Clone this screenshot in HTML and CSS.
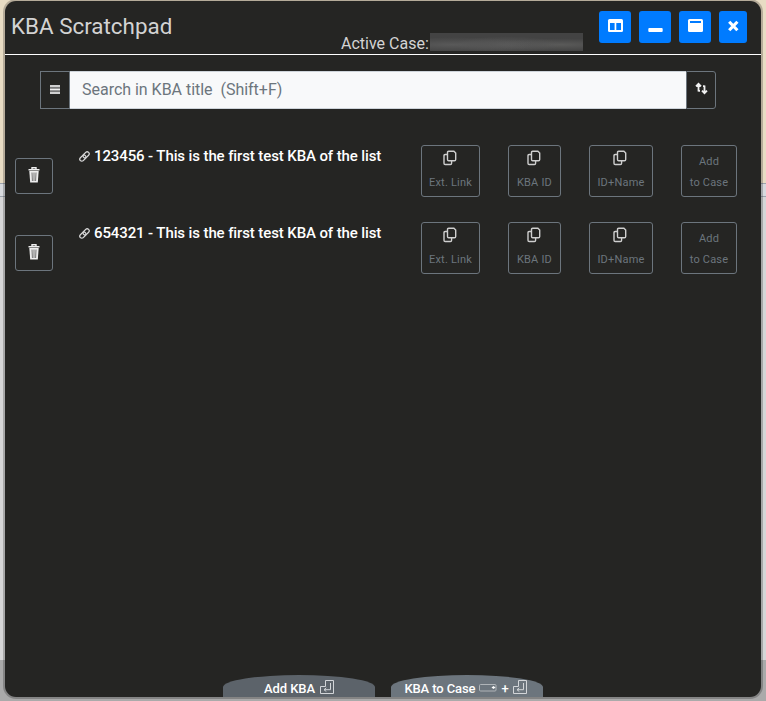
FILE: index.html
```html
<!DOCTYPE html>
<html lang="en">
<head>
<meta charset="utf-8">
<title>KBA Scratchpad</title>
<link rel="stylesheet" href="styles.css">
</head>
<body>
<svg class="defs" width="0" height="0" aria-hidden="true">
  <symbol id="copy" viewBox="0 0 14 16"><path d="M5.7 1.2h5.2l1.8 1.8v6.6q0 1.2-1.2 1.2H5.7q-1.2 0-1.2-1.2V2.4q0-1.2 1.2-1.2zM4 4.5H2.2Q1 4.5 1 5.7v7.6q0 1.2 1.2 1.2h5.2q1.2 0 1.2-1.2v-2" fill="none" stroke="#cfcfcf" stroke-width="1.4"/></symbol>
  <symbol id="trash" viewBox="0 0 12 16"><path d="M4 2V.7h4V2M.5 2.7h11" fill="none" stroke="#eee" stroke-width="1.4"/><path d="M1.3 4h9.4L9.8 15.5H2.2z" fill="#eee"/><path d="M4 5.5l.4 8.5M6 5.5V14M8 5.5L7.6 14" stroke="#555" stroke-width=".8"/></symbol>
  <symbol id="link" viewBox="0 0 12 12"><g transform="rotate(-45 6 6)" fill="none" stroke="#d6d6d6" stroke-width="1.4"><rect x="-.3" y="3.8" width="7.6" height="4.4" rx="2.2"/><rect x="4.7" y="3.8" width="7.6" height="4.4" rx="2.2"/></g></symbol>
  <symbol id="enter" viewBox="0 0 14 14"><path d="M5.5.5h8v13H.5v-7h5z" fill="none" stroke="#d2d5d8" stroke-width="1"/><path d="M10.5 3v6.7H4M6.3 7.8L4 9.7l2.3 1.8" fill="none" stroke="#d2d5d8" stroke-width="1"/></symbol>
</svg>
<main class="window">
  <header class="header">
    <h1 class="title">KBA Scratchpad</h1>
    <div class="active-case">Active Case:<span class="redacted"></span></div>
    <div class="controls">
      <button class="control"><svg width="16" height="14" viewBox="0 0 16 14"><rect x="1" y="0" width="15" height="13" rx="1.5" fill="#fff"/><path d="M3 4h4.6v7H3zM9.3 4h4.7v7H9.3z" fill="#007bff"/></svg></button>
      <button class="control"><svg width="16" height="14" viewBox="0 0 16 14"><rect x="1.3" y="9" width="14.4" height="4" rx="1" fill="#fff"/></svg></button>
      <button class="control"><svg width="16" height="14" viewBox="0 0 16 14"><rect x="1" y="0" width="15" height="13" rx="1.5" fill="#fff"/><path d="M3 2h11v2H3z" fill="#007bff"/></svg></button>
      <button class="control control-close"><svg width="12" height="12" viewBox="0 0 12 12"><path d="M2.2 1.7l8.2 8.6m0-8.6l-8.2 8.6" stroke="#fff" stroke-width="3.1"/></svg></button>
    </div>
  </header>
  <div class="search">
    <button class="search-button menu"><svg width="10" height="10" viewBox="0 0 10 10"><path d="M0 0h10v9H0z" fill="#777"/><path d="M0 1h10M0 4.5h10M0 8h10" stroke="#eee" stroke-width="1.7"/></svg></button>
    <input class="search-input" placeholder="Search in KBA title &nbsp;(Shift+F)">
    <button class="search-button sort"><svg width="13" height="13" viewBox="0 0 13 13"><path d="M3.5 9.5V2M1 4.4L3.5 1.8 6 4.4M9.5 3.5V11M7 8.6l2.5 2.6L12 8.6M3.5 8.8H5M9.5 4.2H8" fill="none" stroke="#f1f1f1" stroke-width="1.8"/></svg></button>
  </div>
  <ul class="list">
    <li class="row">
      <button class="delete"><svg width="12" height="16"><use href="#trash"/></svg></button>
      <div class="name"><svg width="11" height="11"><use href="#link"/></svg><span>123456 - This is the first test KBA of the list</span></div>
      <div class="actions">
        <button class="action ext"><svg width="14" height="16"><use href="#copy"/></svg><span>Ext. Link</span></button>
        <button class="action id"><svg width="14" height="16"><use href="#copy"/></svg><span>KBA ID</span></button>
        <button class="action id-name"><svg width="14" height="16"><use href="#copy"/></svg><span>ID+Name</span></button>
        <button class="action case"><span>Add<br>to Case</span></button>
      </div>
    </li>
    <li class="row">
      <button class="delete"><svg width="12" height="16"><use href="#trash"/></svg></button>
      <div class="name"><svg width="11" height="11"><use href="#link"/></svg><span>654321 - This is the first test KBA of the list</span></div>
      <div class="actions">
        <button class="action ext"><svg width="14" height="16"><use href="#copy"/></svg><span>Ext. Link</span></button>
        <button class="action id"><svg width="14" height="16"><use href="#copy"/></svg><span>KBA ID</span></button>
        <button class="action id-name"><svg width="14" height="16"><use href="#copy"/></svg><span>ID+Name</span></button>
        <button class="action case"><span>Add<br>to Case</span></button>
      </div>
    </li>
  </ul>
  <footer class="footer">
    <button class="tab tab-add"><span>Add KBA</span><svg width="14" height="14"><use href="#enter"/></svg></button>
    <button class="tab tab-case"><span>KBA to Case</span><svg class="space" width="18" height="9" viewBox="0 0 18 9"><rect x=".5" y="1.5" width="16.5" height="6.5" rx="1" fill="none" stroke="#afb4b8"/><path d="M12.5 4.5l2-1.5 2 1.5-2 1.5z" fill="#fff"/></svg><span class="plus">+</span><svg width="14" height="14"><use href="#enter"/></svg></button>
  </footer>
</main>
</body>
</html>
```

FILE: styles.css
```css
* { box-sizing: border-box; }

body {
  margin: 0;
  height: 701px;
  padding: 1px 5px 4px;
  overflow: hidden;
  font-family: Roboto, "Liberation Sans", sans-serif;
  background: linear-gradient(#e8dcc4 0 183px, #9da3ad 183px 184px, #d8dade 184px 196px, #9da3ad 196px 197px, #d6d6d7 197px 660px, #aaa 660px);
}

.defs { position: absolute; }

button {
  display: flex;
  align-items: center;
  justify-content: center;
  padding: 0;
  font: inherit;
  background: none;
}

svg { display: block; flex: none; }

.window {
  display: flex;
  flex-direction: column;
  width: 756px;
  height: 696px;
  overflow: hidden;
  border-radius: 11px;
  background: #252523;
  box-shadow: 0 0 0 2px rgba(0, 0, 0, .22);
}

.header {
  display: flex;
  flex: none;
  height: 54px;
  padding-left: 6px;
  border-bottom: 1px solid #fff;
  color: #d3d3d3;
}

.title {
  width: 330px;
  margin: 11px 0 0;
  font-size: 22.4px;
  font-weight: 400;
  line-height: 28px;
}

.active-case {
  display: flex;
  width: 242px;
  margin-top: 32px;
  font-size: 16px;
  line-height: 22px;
  white-space: nowrap;
}

.redacted {
  width: 153px;
  height: 18px;
  margin-left: 1px;
  background:
    radial-gradient(ellipse at 15% 65%, #595959, transparent 45%),
    radial-gradient(ellipse at 50% 65%, #595959, transparent 50%),
    radial-gradient(ellipse at 85% 65%, #5a5a59, transparent 38%),
    #434343;
}

.controls {
  display: flex;
  gap: 8px;
  margin: 10px 0 0 16px;
}

.control {
  width: 32px;
  height: 32px;
  border: 0;
  border-radius: 3px;
  background: #007bff;
}

.control svg { margin-bottom: 2px; }
.control-close { width: 28px; }

.search {
  display: flex;
  flex: none;
  width: 676px;
  height: 38px;
  margin: 16px 0 0 35px;
}

.search-button {
  width: 30px;
  border: 1px solid #6c757d;
}

.sort { border-radius: 0 3px 3px 0; }
.sort svg { margin-bottom: 4px; }

.search-input {
  width: 616px;
  padding: 0 11px 1px 12px;
  border: solid #ced4da;
  border-width: 1px 0;
  background: #f8f9fa;
  font: 16px Roboto, "Liberation Sans", sans-serif;
  letter-spacing: -.02px;
}

.search-input::placeholder { color: #6c757d; opacity: 1; }

.list {
  flex: 1;
  margin: 36px 0 0;
  padding: 0 0 0 10px;
  list-style: none;
}

.row {
  display: flex;
  height: 77px;
}

.delete {
  width: 38px;
  height: 36px;
  margin-top: 13px;
  border: 1px solid #6c757d;
  border-radius: 3px;
}

.delete svg { margin-bottom: 3px; }

.name {
  display: flex;
  gap: 4px;
  align-items: center;
  width: 341px;
  height: 22px;
  margin-left: 26px;
  color: #fff;
  font-size: 15px;
  font-weight: 500;
  letter-spacing: -.11px;
  white-space: nowrap;
}

.actions {
  display: flex;
  gap: 28px;
  margin-left: 1px;
}

.action {
  flex-direction: column;
  height: 52px;
  padding-top: 1px;
  border: 1px solid #6c757d;
  border-radius: 3px;
  color: #6c757d;
  font-size: 11px;
  line-height: 21px;
  letter-spacing: .2px;
  white-space: nowrap;
}

.action svg { margin: 0 2px 6px 0; }
.ext { width: 59px; }
.id { width: 53px; }
.id-name { width: 64px; }
.case { width: 56px; padding-top: 2px; }

.footer {
  display: flex;
  gap: 16px;
  margin-left: 218px;
}

.tab {
  gap: 4px;
  width: 152px;
  height: 22px;
  padding-top: 4px;
  border: 0;
  border-radius: 50% 50% 0 0 / 12px 12px 0 0;
  background: #6c757d;
  color: #fff;
  font-size: 13px;
  font-weight: 500;
  letter-spacing: -.1px;
  white-space: nowrap;
}

.tab-add {
  gap: 5px;
  background: #5c636a;
}

.tab-case { padding-right: 3px; }
.tab svg { margin-bottom: 2px; }
```
